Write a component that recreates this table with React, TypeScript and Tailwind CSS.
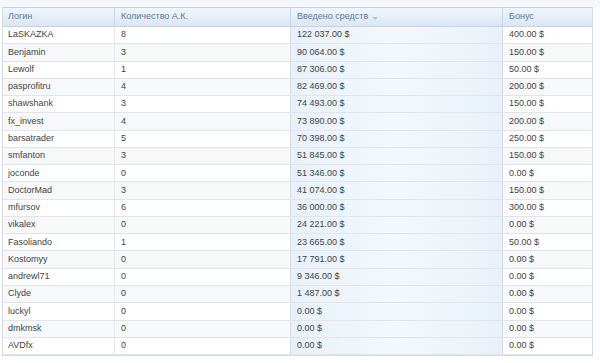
const rows: Array<[string, string, string, string]> = [
  ['LaSKAZKA', '8', '122 037.00 $', '400.00 $'],
  ['Benjamin', '3', '90 064.00 $', '150.00 $'],
  ['Lewolf', '1', '87 306.00 $', '50.00 $'],
  ['pasprofitru', '4', '82 469.00 $', '200.00 $'],
  ['shawshank', '3', '74 493.00 $', '150.00 $'],
  ['fx_invest', '4', '73 890.00 $', '200.00 $'],
  ['barsatrader', '5', '70 398.00 $', '250.00 $'],
  ['smfanton', '3', '51 845.00 $', '150.00 $'],
  ['joconde', '0', '51 346.00 $', '0.00 $'],
  ['DoctorMad', '3', '41 074.00 $', '150.00 $'],
  ['mfursov', '6', '36 000.00 $', '300.00 $'],
  ['vikalex', '0', '24 221.00 $', '0.00 $'],
  ['Fasoliando', '1', '23 665.00 $', '50.00 $'],
  ['Kostomyy', '0', '17 791.00 $', '0.00 $'],
  ['andrewl71', '0', '9 346.00 $', '0.00 $'],
  ['Clyde', '0', '1 487.00 $', '0.00 $'],
  ['luckyl', '0', '0.00 $', '0.00 $'],
  ['dmkmsk', '0', '0.00 $', '0.00 $'],
  ['AVDfx', '0', '0.00 $', '0.00 $'],
];

const cols = 'grid grid-cols-[112px_176px_212px_89px]';

const App: React.FC = () => {
  return (
    <div className="w-[600px] h-[363px] bg-white font-['Liberation_Sans',Arial,sans-serif] text-[9px] text-[#444]">
      <div className="h-[7px] bg-[#f5f8fa]" />
      <div className="ml-[2px] w-[591px] border-x border-b border-[#d3dbe4]">
        {/* header */}
        <div className={`${cols} h-[20px] bg-gradient-to-b from-[#f1f6fb] to-[#dae6f3] border-y border-[#c3d3e4] text-[#5a7aa3]`}>
          <div className="flex items-center pl-[5px] border-r border-[#c9d7e6]">Логин</div>
          <div className="flex items-center pl-[6px] border-r border-[#c9d7e6]">Количество А.К.</div>
          <div className="flex items-center pl-[6px] border-r border-[#c9d7e6]">
            Введено средств
            <span className="ml-[4px] mt-[3px] w-0 h-0 border-x-[3px] border-x-transparent border-t-[3px] border-t-[#b5c3d2]" />
          </div>
          <div className="flex items-center pl-[6px]">Бонус</div>
        </div>
        {rows.map((r, i) => (
          <div
            key={r[0]}
            className={`${cols} h-[17.27px] border-b border-[#e1e5ea] ${i % 2 === 1 ? 'bg-[#f7f8f9]' : 'bg-white'}`}
          >
            <div className="flex items-center pl-[5px] border-r border-[#e4e8ec]">{r[0]}</div>
            <div className="flex items-center pl-[6px] border-r border-[#d4dde7]">{r[1]}</div>
            <div className="flex items-center pl-[6px] border-r border-[#cfdae6] bg-gradient-to-r from-[#e8f1fa] via-[#f3f8fd] to-[#e8f1fa]">
              {r[2]}
            </div>
            <div className="flex items-center pl-[6px]">{r[3]}</div>
          </div>
        ))}
      </div>
    </div>
  );
};

export default App;
